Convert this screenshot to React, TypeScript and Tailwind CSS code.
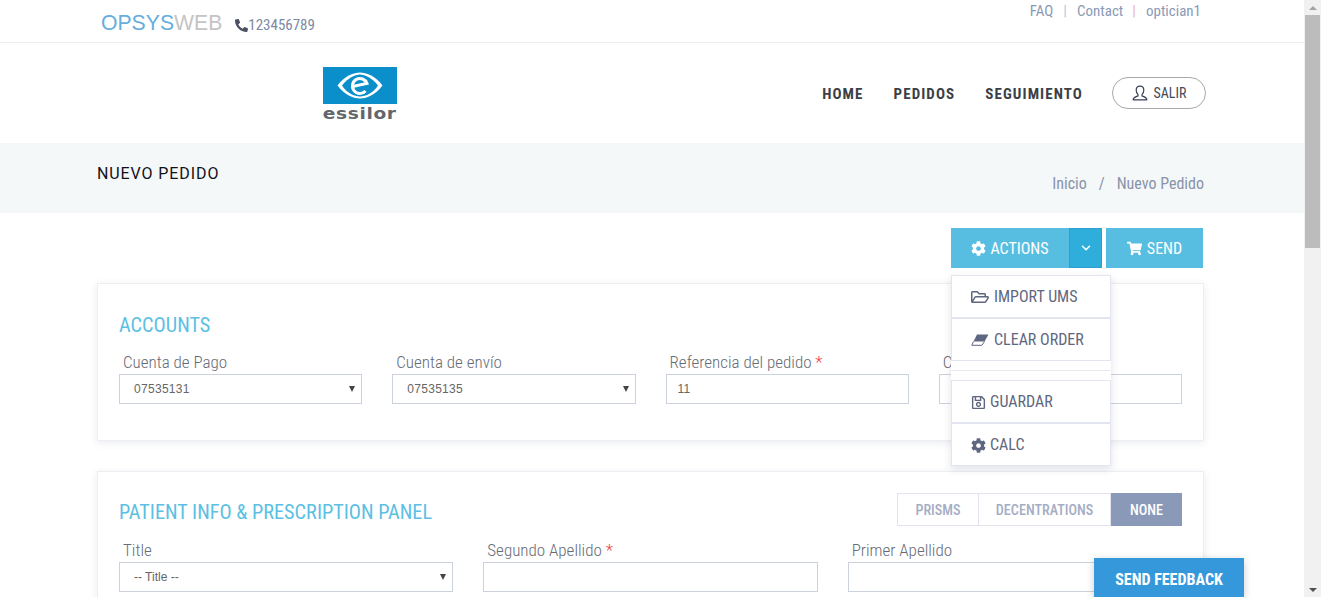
import { FaPhone, FaCog, FaShoppingCart, FaRegFolderOpen, FaRegSave } from "react-icons/fa";
import { ChevronDown } from "lucide-react";

const cond = "[font-family:'Roboto',sans-serif] [font-stretch:75%]";

function Field({ label, req, value, select, tight }: { label: string; req?: boolean; value?: string; select?: boolean; tight?: boolean }) {
  return (
    <div className="min-w-0">
      <div className="h-[23px] pl-[4px] text-[17px] leading-[22px] font-light text-[#666c75] [font-family:'Roboto',sans-serif] [font-stretch:85%]">
        {label}
        {req && <span className="text-[#f0413c]"> *</span>}
      </div>
      <div className={`flex h-[30px] items-center justify-between border border-[#ccd2dd] bg-white pr-[6px] text-[12px] text-[#666] [font-family:'Liberation_Sans',sans-serif] ${select ? "pl-[14px]" : "pl-[11px]"} ${tight ? "tracking-normal" : "tracking-[0.3px]"}`}>
        <span>{value}</span>
        {select && <span className="h-0 w-0 border-x-[3px] border-t-[6px] border-x-transparent border-t-[#444]" />}
      </div>
    </div>
  );
}

function MenuItem({ icon, label, gap }: { icon: React.ReactNode; label: string; gap: string }) {
  return (
    <div className={`flex h-[43px] items-center border border-[#e2e5ef] pl-[19px] pt-[1px] text-[16px] text-[#5f6780] ${gap} ${cond}`}>
      {icon}
      <span>{label}</span>
    </div>
  );
}

function EraserIcon() {
  return (
    <svg width="18" height="12" viewBox="0 0 18 12" fill="none">
      <path d="M6 0.500H17.500L13.500 7.500H2.500Z" fill="#5f6780" />
      <path d="M2.500 7.500L0.800 11.300H10.800L13.500 7.500" stroke="#5f6780" strokeWidth="1" />
    </svg>
  );
}

function UserIcon() {
  return (
    <svg width="16" height="16" viewBox="0 0 16 16" fill="none">
      <path
        d="M8 1.200c-2.500 0-3.800 1.800-3.800 4 0 2 1 3.500 1.800 4.200v1.500c-1.500.8-4.800 1.300-4.800 3.900h13.600c0-2.600-3.300-3.100-4.800-3.900V9.400c.8-.7 1.800-2.200 1.800-4.200 0-2.200-1.300-4-3.800-4Z"
        stroke="#3a4258"
        strokeWidth="1.200"
        strokeLinejoin="round"
      />
    </svg>
  );
}

function EssilorLogo() {
  return (
    <div className="flex w-[74px] flex-col items-center">
      <div className="flex h-[37px] w-[74px] items-center justify-center bg-[#0a8fcb]">
        <svg width="46" height="27" viewBox="0 0 46 27" fill="none">
          <path d="M0.500 13.500C8 3.500 17 0.500 23 0.500s15 3 22.500 13C38 23.500 29 26.500 23 26.500S8 23.500 0.500 13.500Z" fill="#fff" />
          <path d="M5 13.500C11 6 18 2.500 23 2.500s12 3.500 18 11C36 21 29 24.500 23 24.500S10 21 5 13.500Z" fill="#0a8fcb" />
          <path d="M15.500 14.500L30 11.500A7.500 7.500 0 1 0 28.500 19" stroke="#fff" strokeWidth="3" />
        </svg>
      </div>
      <div className="mt-[1px] origin-center scale-x-[1.24] text-[15px] leading-[18px] font-bold tracking-[0.5px] text-[#63666d] [font-family:'DejaVu_Sans',sans-serif]">essilor</div>
    </div>
  );
}

export default function App() {
  const navItem = `text-[15px] font-bold tracking-[1.1px] text-[#3c3f46] ${cond}`;
  return (
    <div className="relative flex h-[597px] w-[1321px] overflow-hidden bg-white [font-family:'Roboto',sans-serif]">
      <div className="w-[1304px] shrink-0">
        {/* top bar */}
        <div className="flex h-[43px] justify-between border-b border-[#eeeeee] pl-[101px] pr-[103px]">
          <div className="flex items-start pt-[10px]">
            <span className="text-[21.200px] leading-[26px] [font-family:'Liberation_Sans',sans-serif]">
              <span className="text-[#66aedd]">OPSYS</span>
              <span className="text-[#c4c4c4]">WEB</span>
            </span>
            <span className={`ml-[13px] mt-[5px] flex items-center text-[15px] leading-[20px] text-[#7d8aa3] ${cond}`}>
              <FaPhone className="-scale-x-100 text-[13px] text-[#4a5060]" />
              123456789
            </span>
          </div>
          <div className={`flex pt-[1px] text-[15px] leading-[20px] text-[#8a9ab5] ${cond}`}>
            <span>FAQ</span>
            <span className="mx-[10px] text-[#a9cbe6]">|</span>
            <span>Contact</span>
            <span className="ml-[9px] mr-[10px] text-[#e8b6b0]">|</span>
            <span>optician1</span>
          </div>
        </div>

        {/* header */}
        <div className="flex h-[100px] items-center justify-between pl-[323px] pr-[98px]">
          <div className="pt-[4px]">
            <EssilorLogo />
          </div>
          <div className="flex items-center">
            <span className={`pt-[3px] ${navItem}`}>HOME</span>
            <span className={`ml-[30px] pt-[3px] ${navItem}`}>PEDIDOS</span>
            <span className={`ml-[30px] pt-[3px] ${navItem}`}>SEGUIMIENTO</span>
            <div className={`ml-[29px] flex h-[32px] w-[94px] items-center justify-center gap-[6px] rounded-full border border-[#a8a8a8] text-[14px] text-[#444a58] ${cond}`}>
              <UserIcon />
              SALIR
            </div>
          </div>
        </div>

        {/* title band */}
        <div className="flex h-[70px] justify-between bg-[#f4f8f9] pl-[97px] pr-[100px]">
          <div className="pt-[20px] text-[16px] leading-[21px] tracking-[0.9px] text-[#111118]">NUEVO PEDIDO</div>
          <div className={`pt-[31px] text-[16px] leading-[20px] text-[#8a93a8] ${cond}`}>
            Inicio<span className="mx-[12px]">/</span>Nuevo Pedido
          </div>
        </div>

        {/* actions */}
        <div className="flex h-[40px] justify-end mt-[15px] pr-[101px]">
          <div className={`flex items-center text-[16px] text-white ${cond}`}>
            <div className="flex h-[40px] w-[118px] items-center justify-center gap-[4px] bg-[#57bee2] pt-[1px]">
              <FaCog className="text-[15px]" />
              ACTIONS
            </div>
            <div className="flex h-[40px] w-[33px] items-center justify-center border border-[#2ba0c8] bg-[#30aedb]">
              <ChevronDown size={14} strokeWidth={2.500} />
            </div>
            <div className="ml-[4px] flex h-[40px] w-[97px] items-center justify-center gap-[5px] bg-[#57bee2] pt-[1px]">
              <FaShoppingCart className="text-[15px]" />
              SEND
            </div>
          </div>
        </div>

        {/* accounts */}
        <div className="ml-[97px] mr-[100px] mt-[15px] h-[158px] border border-[#eceef3] px-[21px] pt-[28px] shadow-[0_2px_8px_rgba(60,70,100,0.1)]">
          <div className={`h-[26px] text-[20.300px] leading-[26px] text-[#5bc0e3] ${cond}`}>ACCOUNTS</div>
          <div className="mt-[13px] grid grid-cols-4 gap-[30px]">
            <Field label="Cuenta de Pago" value="07535131" select />
            <Field label="Cuenta de envío" value="07535135" select />
            <Field label="Referencia del pedido" req value="11" />
            <Field label="Cuenta" />
          </div>
        </div>

        {/* patient */}
        <div className="ml-[97px] mr-[100px] mt-[30px] h-[200px] border border-[#eceef3] px-[21px] pt-[21px] shadow-[0_2px_8px_rgba(60,70,100,0.1)]">
          <div className="flex h-[34px] items-start justify-between">
            <div className={`pt-[5px] text-[20.300px] leading-[28px] text-[#5bc0e3] ${cond}`}>PATIENT INFO &amp; PRESCRIPTION PANEL</div>
            <div className={`flex h-[33px] text-[14.200px] font-medium ${cond}`}>
              <div className="flex w-[82px] items-center justify-center border border-[#e1e4ee] pt-[2px] text-[#a4adc4]">PRISMS</div>
              <div className="flex w-[132px] items-center justify-center border-y border-r border-[#e1e4ee] pt-[2px] text-[#a4adc4]">DECENTRATIONS</div>
              <div className="flex w-[71px] items-center justify-center bg-[#8a99b8] pt-[2px] text-white">NONE</div>
            </div>
          </div>
          <div className="mt-[12px] grid grid-cols-3 gap-[30px]">
            <Field label="Title" value="-- Title --" select tight />
            <Field label="Segundo Apellido" req />
            <Field label="Primer Apellido" />
          </div>
        </div>
      </div>

      {/* scrollbar */}
      <div className="flex h-[597px] w-[17px] shrink-0 flex-col items-center bg-[#f1f1f1]">
        <div className="flex h-[15px] w-full items-center justify-center">
          <div className="h-0 w-0 border-x-[4px] border-b-[4px] border-x-transparent border-b-[#a3a3a3]" />
        </div>
        <div className="h-[233px] w-[15px] bg-[#bcbcbc]" />
        <div className="flex-1" />
        <div className="flex h-[15px] w-full items-center justify-center">
          <div className="h-0 w-0 border-x-[4px] border-t-[4px] border-x-transparent border-t-[#505050]" />
        </div>
      </div>

      {/* dropdown */}
      <div className="absolute left-[951px] top-[275px] w-[160px] bg-white shadow-[0_3px_8px_rgba(60,70,100,0.15)]">
        <MenuItem gap="gap-[5px]" icon={<FaRegFolderOpen className="text-[18px] text-[#5f6780]" />} label="IMPORT UMS" />
        <MenuItem gap="gap-[5px]" icon={<EraserIcon />} label="CLEAR ORDER" />
        <div className="my-[9px] h-px bg-[#e8eaf0]" />
        <MenuItem gap="gap-[4px]" icon={<FaRegSave className="text-[15px] text-[#5f6780]" />} label="GUARDAR" />
        <MenuItem gap="gap-[4px]" icon={<FaCog className="text-[15px] text-[#5f6780]" />} label="CALC" />
      </div>

      {/* feedback */}
      <div className={`absolute left-[1094px] top-[558px] flex h-[39px] w-[150px] items-center justify-center bg-[#3498db] pt-[4px] text-[16px] font-bold text-white shadow-[0_2px_8px_rgba(0,0,0,0.2)] ${cond}`}>
        SEND FEEDBACK
      </div>
    </div>
  );
}
